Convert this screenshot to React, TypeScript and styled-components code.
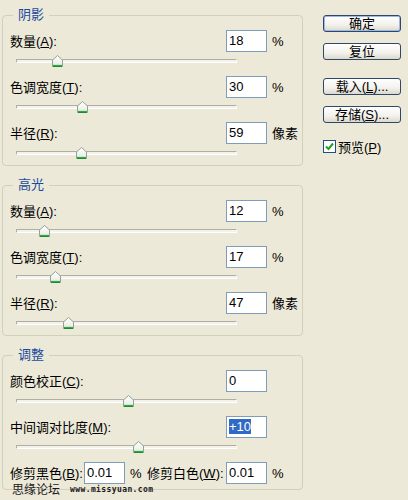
import React from 'react';
import styled, { createGlobalStyle } from 'styled-components';

const Global = createGlobalStyle`
  html, body { margin: 0; padding: 0; background: #ECE9D8; }
  body {
    font-family: "Liberation Sans", "Noto Sans CJK SC", sans-serif;
    font-size: 13px;
    color: #000;
  }
`;

const Page = styled.div`
  position: relative;
  width: 408px;
  height: 500px;
  box-sizing: border-box;
  padding-left: 2px;
  display: flex;
  gap: 20px;
  background: #ECE9D8;
  overflow: hidden;
`;

const LeftCol = styled.div`
  width: 301px;
  padding-top: 8px;
  display: flex;
  flex-direction: column;
  gap: 12px;
`;

const Group = styled.fieldset`
  margin: 0;
  padding: 8px 1px 5px 7px;
  border: 1px solid #D0D0BF;
  border-radius: 4px;
  min-width: 0;
`;

const Legend = styled.legend`
  margin-left: 3px;
  padding: 0 5px;
  font-size: 13px;
  line-height: 14px;
  color: #1A4A9E;
`;

const Stack = styled.div`
  display: flex;
  flex-direction: column;
  gap: 8px;
`;

const Field = styled.div`
  display: flex;
  flex-direction: column;
`;

const Row = styled.div`
  display: flex;
  align-items: center;
  height: 22px;
`;

const Label = styled.span<{ $w?: number }>`
  ${p => (p.$w ? `width: ${p.$w}px; flex: none;` : 'flex: 1;')}
  white-space: nowrap;
  font-size: 13px;
  line-height: 15px;
`;

const Input = styled.div`
  width: 41px;
  height: 22px;
  box-sizing: border-box;
  flex: none;
  border: 1px solid #7F9DB9;
  background: #fff;
  padding-left: 2px;
  font-family: "Liberation Sans", sans-serif;
  font-size: 13px;
  line-height: 20px;
`;

const Selected = styled.span`
  background: #316AC5;
  color: #fff;
`;

const Unit = styled.span<{ $w?: number }>`
  width: ${p => p.$w ?? 29}px;
  margin-left: 5px;
  flex: none;
  font-size: 13px;
  line-height: 15px;
  white-space: nowrap;
`;

const Slider = styled.div`
  position: relative;
  height: 16px;
  margin-left: 6px;
  width: 221px;
`;

const Track = styled.div`
  position: absolute;
  left: 0;
  right: 0;
  top: 7px;
  height: 4px;
  box-sizing: border-box;
  border-top: 1px solid #B0AEA2;
  border-left: 1px solid #B0AEA2;
  border-bottom: 1px solid #FFFFFF;
  border-right: 1px solid #FFFFFF;
  background: #F3F2EC;
  border-radius: 1px;
`;

const ThumbWrap = styled.div`
  position: absolute;
  top: 3px;
  width: 11px;
  height: 12px;
`;

const Thumb = ({ center }: { center: number }) => (
  <ThumbWrap style={{ left: center - 16 - 5.5 }}>
    <svg width="11" height="12" viewBox="0 0 11 12">
      <defs>
        <linearGradient id="tg" x1="0" y1="0" x2="0" y2="1">
          <stop offset="0" stopColor="#FFFFFF" />
          <stop offset="0.7" stopColor="#F0F0EA" />
          <stop offset="1" stopColor="#D8E8D0" />
        </linearGradient>
      </defs>
      <path d="M5.5 0.5 L10.5 5 L10.5 11.5 L0.5 11.5 L0.5 5 Z" fill="url(#tg)" stroke="#8FA59A" strokeWidth="1" />
      <path d="M1 10.5 H10" stroke="#2DAA44" strokeWidth="1.2" />
      <path d="M1 11.5 H10" stroke="#1F8A34" strokeWidth="1" />
    </svg>
  </ThumbWrap>
);

const RightCol = styled.div`
  padding-top: 15px;
  display: flex;
  flex-direction: column;
  align-items: flex-start;
`;

const Button = styled.div<{ $default?: boolean; $gap?: number }>`
  width: 78px;
  height: 17px;
  box-sizing: border-box;
  margin-top: ${p => p.$gap ?? 0}px;
  border: 1px solid #2F4868;
  border-radius: 3px;
  background: linear-gradient(#FFFFFF, #F2F1EC 60%, #DCD8CC);
  box-shadow: ${p => (p.$default ? 'inset 0 0 0 1px #9DB7E8' : 'none')};
  font-size: 13px;
  line-height: 15px;
  text-align: center;
  white-space: nowrap;
`;

const CheckRow = styled.div`
  margin-top: 16px;
  display: flex;
  align-items: center;
  gap: 2px;
  height: 14px;
  font-size: 13px;
`;

const CheckBox = styled.div`
  width: 13px;
  height: 13px;
  box-sizing: border-box;
  border: 1px solid #1C5180;
  background: #fff;
  display: flex;
  align-items: center;
  justify-content: center;
`;

const Watermark = styled.div`
  position: absolute;
  left: 12px;
  top: 483px;
  display: flex;
  align-items: flex-end;
  gap: 10px;
  color: #1a1a1a;
`;

const WmCn = styled.span`
  font-family: "Noto Sans CJK SC", sans-serif;
  font-size: 12px;
  line-height: 12px;
`;

const WmEn = styled.span`
  font-family: "DejaVu Sans Mono", monospace;
  font-weight: bold;
  font-size: 8px;
  line-height: 9px;
  letter-spacing: 0.4px;
  padding-bottom: 1px;
`;

type RowData = { label: React.ReactNode; value: React.ReactNode; unit?: string; thumb: number };

const SliderField = ({ label, value, unit, thumb }: RowData) => (
  <Field>
    <Row>
      <Label>{label}</Label>
      <Input>{value}</Input>
      <Unit>{unit ?? ''}</Unit>
    </Row>
    <Slider>
      <Track />
      <Thumb center={thumb} />
    </Slider>
  </Field>
);

const shadows: RowData[] = [
  { label: <>数量(<u>A</u>):</>, value: '18', unit: '%', thumb: 57 },
  { label: <>色调宽度(<u>T</u>):</>, value: '30', unit: '%', thumb: 82 },
  { label: <>半径(<u>R</u>):</>, value: '59', unit: '像素', thumb: 81 },
];

const highlights: RowData[] = [
  { label: <>数量(<u>A</u>):</>, value: '12', unit: '%', thumb: 44 },
  { label: <>色调宽度(<u>T</u>):</>, value: '17', unit: '%', thumb: 55 },
  { label: <>半径(<u>R</u>):</>, value: '47', unit: '像素', thumb: 68 },
];

const adjust: RowData[] = [
  { label: <>颜色校正(<u>C</u>):</>, value: '0', thumb: 128 },
  { label: <>中间调对比度(<u>M</u>):</>, value: <Selected>+10</Selected>, thumb: 138 },
];

export default function App() {
  return (
    <>
      <Global />
      <Page>
        <LeftCol>
          <Group>
            <Legend>阴影</Legend>
            <Stack>
              {shadows.map((r, i) => <SliderField key={i} {...r} />)}
            </Stack>
          </Group>
          <Group>
            <Legend>高光</Legend>
            <Stack>
              {highlights.map((r, i) => <SliderField key={i} {...r} />)}
            </Stack>
          </Group>
          <Group>
            <Legend>调整</Legend>
            <Stack>
              {adjust.map((r, i) => <SliderField key={i} {...r} />)}
              <Row>
                <Label $w={74}>修剪黑色(<u>B</u>):</Label>
                <Input>0.01</Input>
                <Unit $w={17}>%</Unit>
                <Label $w={79}>修剪白色(<u>W</u>):</Label>
                <Input>0.01</Input>
                <Unit>%</Unit>
              </Row>
            </Stack>
          </Group>
        </LeftCol>
        <RightCol>
          <Button $default>确定</Button>
          <Button $gap={11}>复位</Button>
          <Button $gap={18}>载入(<u>L</u>)...</Button>
          <Button $gap={11}>存储(<u>S</u>)...</Button>
          <CheckRow>
            <CheckBox>
              <svg width="9" height="9" viewBox="0 0 9 9">
                <path d="M1 4.5 L3.5 7 L8 1.5" fill="none" stroke="#21A121" strokeWidth="2" />
              </svg>
            </CheckBox>
            <span>预览(<u>P</u>)</span>
          </CheckRow>
        </RightCol>
        <Watermark>
          <WmCn>思缘论坛</WmCn>
          <WmEn>www.missyuan.com</WmEn>
        </Watermark>
      </Page>
    </>
  );
}
